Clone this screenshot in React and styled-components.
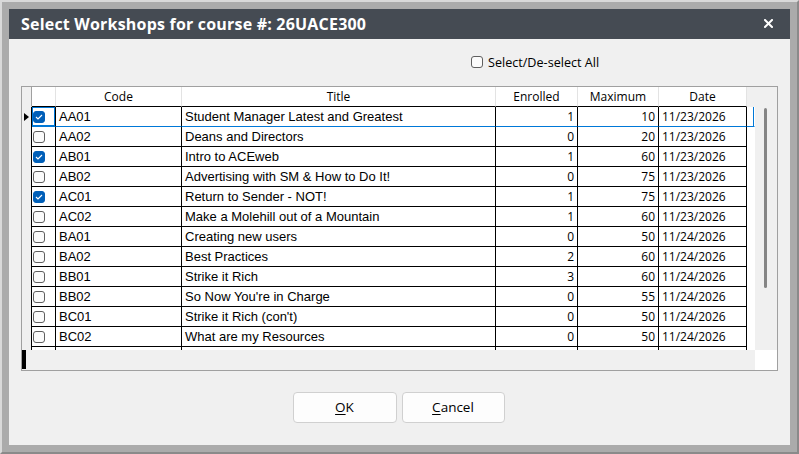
import styled, { createGlobalStyle } from "styled-components";

const GlobalStyle = createGlobalStyle`
  html, body {
    margin: 0;
    padding: 0;
    background: #ababab;
  }

  * {
    box-sizing: border-box;
  }
`;

const workshops = [
  { code: "AA01", title: "Student Manager Latest and Greatest", enrolled: 1, max: 10, date: "11/23/2026", checked: true },
  { code: "AA02", title: "Deans and Directors", enrolled: 0, max: 20, date: "11/23/2026" },
  { code: "AB01", title: "Intro to ACEweb", enrolled: 1, max: 60, date: "11/23/2026", checked: true },
  { code: "AB02", title: "Advertising with SM & How to Do It!", enrolled: 0, max: 75, date: "11/23/2026" },
  { code: "AC01", title: "Return to Sender - NOT!", enrolled: 1, max: 75, date: "11/23/2026", checked: true },
  { code: "AC02", title: "Make a Molehill out of a Mountain", enrolled: 1, max: 60, date: "11/23/2026" },
  { code: "BA01", title: "Creating new users", enrolled: 0, max: 50, date: "11/24/2026" },
  { code: "BA02", title: "Best Practices", enrolled: 2, max: 60, date: "11/24/2026" },
  { code: "BB01", title: "Strike it Rich", enrolled: 3, max: 60, date: "11/24/2026" },
  { code: "BB02", title: "So Now You're in Charge", enrolled: 0, max: 55, date: "11/24/2026" },
  { code: "BC01", title: "Strike it Rich (con't)", enrolled: 0, max: 50, date: "11/24/2026" },
  { code: "BC02", title: "What are my Resources", enrolled: 0, max: 50, date: "11/24/2026" },
];

// column widths include the 1px right grid line
const cols = {
  ind: 10,
  check: 24,
  code: 126,
  title: 314,
  enrolled: 82,
  max: 81,
  date: 88,
  extra: 8,
};

const uiFont = `"Open Sans", "Noto Sans", sans-serif`;
const cellFont = `"Liberation Sans", Arial, sans-serif`;

const Frame = styled.div`
  width: 799px;
  height: 454px;
  padding: 7px;
  border-top: 2px solid #d9d9d9;
  border-left: 2px solid #d9d9d9;
  border-right: 2px solid #8a8a8a;
  border-bottom: 2px solid #8a8a8a;
  background: #ababab;
`;

const Dialog = styled.div`
  width: 781px;
  height: 436px;
  display: flex;
  flex-direction: column;
  background: #f0f0f0;
`;

const TitleBar = styled.div`
  height: 30px;
  flex-shrink: 0;
  display: flex;
  align-items: center;
  justify-content: space-between;
  padding: 0 17px 1px 12px;
  background: #454b53;
  color: #fff;
  font-family: ${uiFont};
  font-weight: 700;
  font-size: 16px;
  letter-spacing: 0.2px;
`;

const CloseIcon = () => (
  <svg width="9" height="9" viewBox="0 0 9 9">
    <path d="M1 1 L8 8 M8 1 L1 8" stroke="#fff" strokeWidth="2" strokeLinecap="square" />
  </svg>
);

const Body = styled.div`
  flex: 1;
  display: flex;
  flex-direction: column;
  padding: 0 13px 0 12px;
`;

const SelectAllRow = styled.label`
  height: 20px;
  margin-top: 13px;
  padding-left: 450px;
  display: flex;
  align-items: center;
  gap: 5px;
  font-family: ${uiFont};
  font-size: 12.6px;
  color: #000;
`;

const Box = styled.span`
  width: 12px;
  height: 12px;
  flex-shrink: 0;
  border-radius: 3px;
  display: flex;
  align-items: center;
  justify-content: center;
  background: ${(p) => (p.$checked ? "#005fb8" : "#fbfbfb")};
  border: 1px solid ${(p) => (p.$checked ? "#005fb8" : "#5f5f5f")};
`;

const CheckBox = ({ checked }) => (
  <Box $checked={checked}>
    {checked && (
      <svg width="8" height="6" viewBox="0 0 8 6">
        <path d="M1 3 L3 5 L7 1" fill="none" stroke="#fff" strokeWidth="1.1" />
      </svg>
    )}
  </Box>
);

const Grid = styled.div`
  margin-top: 14px;
  width: 757px;
  height: 285px;
  border: 1px solid #a0a0a0;
  display: grid;
  grid-template-columns: 733px 22px;
  grid-template-rows: 263px 20px;
  background: #fff;
`;

const Main = styled.div`
  overflow: hidden;
  display: flex;
  flex-direction: column;
`;

const Row = styled.div`
  display: flex;
  flex-shrink: 0;
  height: ${(p) => p.$h || 20}px;
`;

const HeadCell = styled.div`
  width: ${(p) => p.$w}px;
  flex-shrink: 0;
  display: flex;
  align-items: center;
  justify-content: center;
  padding-bottom: 1px;
  background: ${(p) => (p.$gray ? "#f0f0f0" : "#fff")};
  border-right: 1px solid ${(p) => (p.$dark ? "#a0a0a0" : p.$none ? "transparent" : "#e3e3e3")};
  border-bottom: 1px solid ${(p) => (p.$gray ? "#f0f0f0" : "#000")};
  font-family: ${uiFont};
  font-size: 12px;
  color: #000;
`;

const Cell = styled.div`
  width: ${(p) => p.$w}px;
  flex-shrink: 0;
  display: flex;
  align-items: center;
  justify-content: ${(p) => (p.$right ? "flex-end" : "flex-start")};
  padding: 0 ${(p) => (p.$right ? 3 : 0)}px 0 ${(p) => (p.$right ? 0 : 3)}px;
  border-right: 1px solid ${(p) => (p.$open ? "transparent" : "#000")};
  border-bottom: 1px solid ${(p) => (p.$active ? "#0078d7" : p.$open ? "transparent" : "#000")};
  font-family: ${(p) => (p.$ui ? uiFont : cellFont)};
  font-size: ${(p) => (p.$ui ? 12 : 13)}px;
  color: #000;
  white-space: nowrap;
  overflow: hidden;
`;

const IndCell = styled.div`
  width: ${cols.ind}px;
  flex-shrink: 0;
  display: flex;
  align-items: center;
  padding-left: 2px;
  background: #f0f0f0;
  border-right: 1px solid #000;
`;

const CheckCell = styled(Cell)`
  padding-left: 1px;
  box-shadow: ${(p) => (p.$focus ? "inset 0 0 0 1px #0078d7" : "none")};
`;

const ExtraCell = styled(Cell)`
  box-shadow: ${(p) => (p.$active ? "inset -1px 0 0 #0078d7" : "none")};
`;

const VScroll = styled.div`
  background: #f0f0f0;
  display: flex;
  flex-direction: column;
  align-items: center;
  padding: 21px 2px 0 0;
`;

const Thumb = styled.div`
  width: 3px;
  height: 180px;
  border-radius: 2px;
  background: #858585;
`;

const HScroll = styled.div`
  background: #f0f0f0;
  padding-bottom: 1px;
`;

const HThumb = styled.div`
  width: 4px;
  height: 19px;
  background: #000;
`;

const Corner = styled.div`
  background: #fff;
`;

const Buttons = styled.div`
  margin-top: 21px;
  display: flex;
  justify-content: center;
  gap: 5px;
  padding-right: 1px;
`;

const Button = styled.button`
  width: ${(p) => p.$w}px;
  height: 31px;
  border: 1px solid #d0d0d0;
  border-radius: 4px;
  background: #fdfdfd;
  font-family: ${uiFont};
  font-size: 13.5px;
  color: #000;
  padding: 0 0 1px;

  u {
    text-decoration-thickness: 1px;
    text-underline-offset: 2px;
  }
`;

const Arrow = () => (
  <svg width="5" height="8" viewBox="0 0 5 8">
    <path d="M0 0 L5 4 L0 8 Z" fill="#000" />
  </svg>
);

export default function App() {
  return (
    <>
      <GlobalStyle />
      <Frame>
        <Dialog>
          <TitleBar>
            <span>Select Workshops for course #: 26UACE300</span>
            <CloseIcon />
          </TitleBar>

          <Body>
            <SelectAllRow>
              <CheckBox checked={false} />
              <span>Select/De-select All</span>
            </SelectAllRow>

            <Grid>
              <Main>
                <Row>
                  <HeadCell $w={cols.ind} $gray $dark />
                  <HeadCell $w={cols.check} />
                  <HeadCell $w={cols.code}>Code</HeadCell>
                  <HeadCell $w={cols.title}>Title</HeadCell>
                  <HeadCell $w={cols.enrolled}>Enrolled</HeadCell>
                  <HeadCell $w={cols.max}>Maximum</HeadCell>
                  <HeadCell $w={cols.date}>Date</HeadCell>
                  <HeadCell $w={cols.extra} $gray $none />
                </Row>

                {workshops.map((w, i) => {
                  const active = i === 0;
                  return (
                    <Row key={w.code}>
                      <IndCell>{active && <Arrow />}</IndCell>
                      <CheckCell $w={cols.check} $active={active} $focus={active}>
                        <CheckBox checked={!!w.checked} />
                      </CheckCell>
                      <Cell $w={cols.code} $active={active}>{w.code}</Cell>
                      <Cell $w={cols.title} $active={active}>{w.title}</Cell>
                      <Cell $w={cols.enrolled} $active={active} $right $ui>{w.enrolled}</Cell>
                      <Cell $w={cols.max} $active={active} $right $ui>{w.max}</Cell>
                      <Cell $w={cols.date} $active={active} $ui>{w.date}</Cell>
                      <ExtraCell $w={cols.extra} $active={active} $open />
                    </Row>
                  );
                })}

                {/* next row, cut off by the bottom edge */}
                <Row $h={4}>
                  <IndCell />
                  <Cell $w={cols.check} />
                  <Cell $w={cols.code} />
                  <Cell $w={cols.title} />
                  <Cell $w={cols.enrolled} />
                  <Cell $w={cols.max} />
                  <Cell $w={cols.date} />
                  <ExtraCell $w={cols.extra} $open />
                </Row>
              </Main>

              <VScroll>
                <Thumb />
              </VScroll>

              <HScroll>
                <HThumb />
              </HScroll>
              <Corner />
            </Grid>

            <Buttons>
              <Button $w={104}>
                <u>O</u>K
              </Button>
              <Button $w={103}>
                <u>C</u>ancel
              </Button>
            </Buttons>
          </Body>
        </Dialog>
      </Frame>
    </>
  );
}
